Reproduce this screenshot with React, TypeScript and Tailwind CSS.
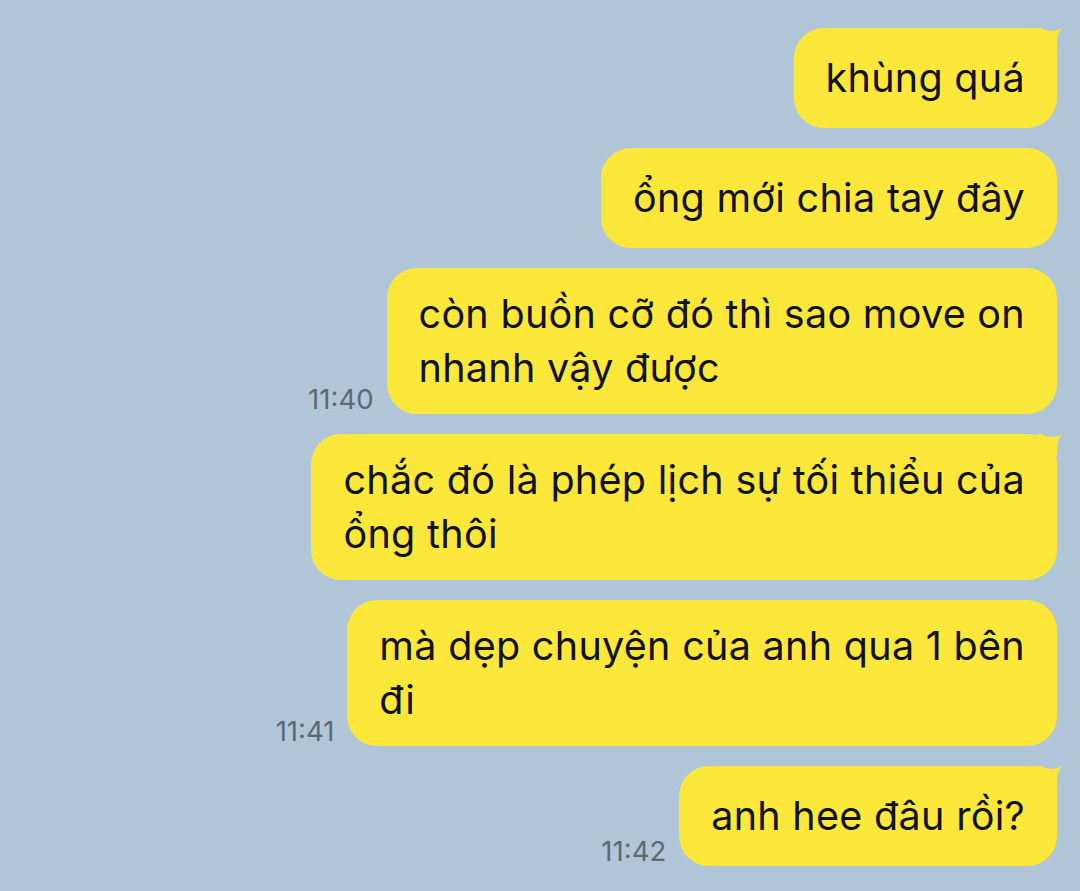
import React from 'react';

type Msg = {
  lines: string[];
  time?: string;
  tail?: boolean;
};

const messages: Msg[] = [
  { lines: ['khùng quá'], tail: true },
  { lines: ['ổng mới chia tay đây'] },
  { lines: ['còn buồn cỡ đó thì sao move on', 'nhanh vậy được'], time: '11:40' },
  { lines: ['chắc đó là phép lịch sự tối thiểu của', 'ổng thôi'], tail: true },
  { lines: ['mà dẹp chuyện của anh qua 1 bên', 'đi'], time: '11:41' },
  { lines: ['anh hee đâu rồi?'], time: '11:42', tail: true },
];

function Tail() {
  return (
    <svg
      className="absolute top-0 right-[-6px]"
      width="26"
      height="22"
      viewBox="0 0 26 22"
    >
      <path
        d="M0 0 L4 0 C10 3.5 17 4 25 0 C21.5 4 20 9 20 16 L20 22 L0 22 Z"
        fill="#fce83a"
      />
    </svg>
  );
}

function Bubble({ msg }: { msg: Msg }) {
  const multi = msg.lines.length > 1;
  return (
    <div className="flex items-end gap-[13px]">
      {msg.time && (
        <span className="mb-[1px] text-[27.5px] leading-[28px] text-[#5d6975]">
          {msg.time}
        </span>
      )}
      <div
        className={
          multi
            ? 'relative rounded-[30px] bg-[#fce83a] px-8 py-[19px] text-[39.5px] leading-[54px] tracking-[0.3px] text-[#111] whitespace-nowrap'
            : msg.tail
            ? 'relative rounded-[30px] rounded-tr-[24px] bg-[#fce83a] px-8 py-[23px] text-[39.5px] leading-[54px] tracking-[0.3px] text-[#111] whitespace-nowrap'
            : 'relative rounded-[30px] bg-[#fce83a] px-8 py-[23px] text-[39.5px] leading-[54px] tracking-[0.3px] text-[#111] whitespace-nowrap'
        }
      >
        {msg.tail && <Tail />}
        {msg.lines.map((l, i) => (
          <div key={i}>{l}</div>
        ))}
      </div>
    </div>
  );
}

export default function App() {
  return (
    <div
      className="h-[891px] w-[1080px] overflow-hidden bg-[#b1c6d9] pt-[28px] pr-[23px]"
      style={{ fontFamily: 'Inter, "Noto Sans", sans-serif' }}
    >
      <div className="flex flex-col items-end gap-[20px]">
        {messages.map((m, i) => (
          <Bubble key={i} msg={m} />
        ))}
      </div>
    </div>
  );
}
